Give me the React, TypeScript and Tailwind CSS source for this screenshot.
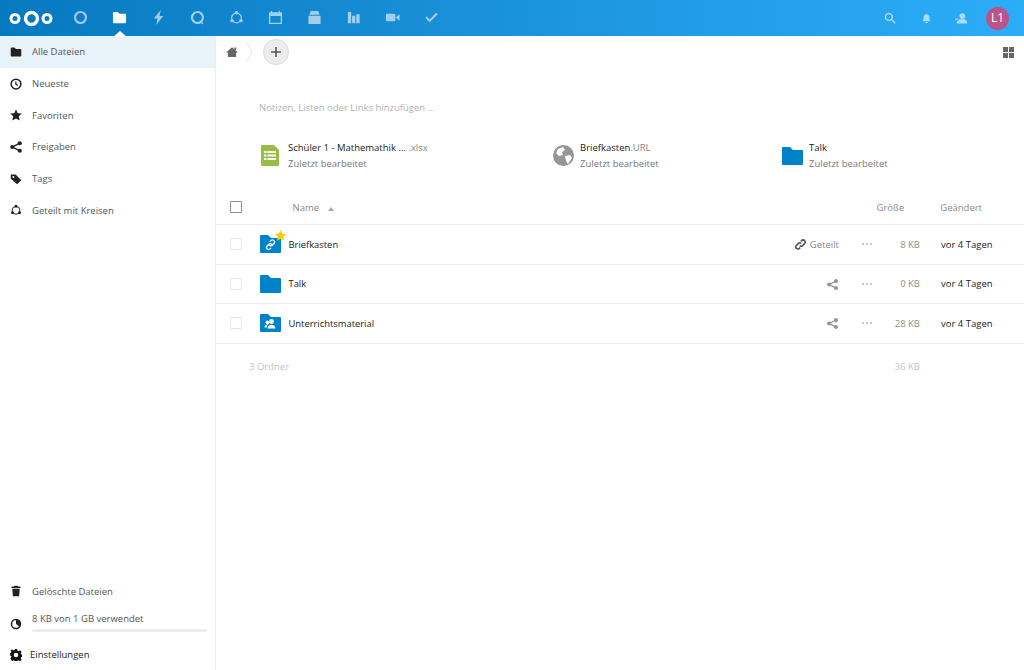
const NavIcon = ({ children, active }: { children: React.ReactNode; active?: boolean }) => (
  <div className={"relative w-[39px] h-9 flex items-center justify-center " + (active ? "opacity-100" : "opacity-60")}>
    <svg width="15" height="15" viewBox="0 0 16 16" fill="white" className="-mt-[1px]">
      {children}
    </svg>
  </div>
);

const Folder = ({ children, star }: { children?: React.ReactNode; star?: boolean }) => (
  <div className="relative w-[21px] h-[18px] shrink-0">
    <svg width="21" height="18" viewBox="0 0 21 18" fill="#0082c9">
      <path d="M0 1a1 1 0 0 1 1-1h7l3 3h9a1 1 0 0 1 1 1v13a1 1 0 0 1-1 1H1a1 1 0 0 1-1-1z" />
      {children}
    </svg>
    {star && (
      <svg className="absolute -top-[5px] -right-[5px]" width="11" height="11" viewBox="0 0 16 16" fill="#fc0">
        <path d="M8 0l2.400 5.200 5.600.7-4.100 3.900 1.100 5.700L8 12.700l-5 2.800 1.100-5.700L0 5.900l5.600-.7z" />
      </svg>
    )}
  </div>
);

const ShareIcon = () => (
  <svg width="11" height="11" viewBox="0 0 16 16" fill="#969696" className="mr-[1px]">
    <circle cx="3" cy="8" r="3" />
    <circle cx="13" cy="3" r="3" />
    <circle cx="13" cy="13" r="3" />
    <path d="M3 7l10-5v2L3 9zM3 7l10 5v2L3 9z" />
  </svg>
);

const Circles = () => (
  <>
    <circle cx="8" cy="8.500" r="5.200" fill="none" stroke="currentColor" strokeWidth="1.300" />
    <circle cx="8" cy="3" r="1.900" />
    <circle cx="3.200" cy="11.500" r="1.900" />
    <circle cx="12.800" cy="11.500" r="1.900" />
  </>
);

const SideItem = ({ icon, label, active }: { icon: React.ReactNode; label: string; active?: boolean }) => (
  <div className={"flex items-center h-[31.7px] pl-[10px] text-[#222] " + (active ? "bg-[#e8f3f9]" : "")}>
    <svg width="12" height="12" viewBox="0 0 16 16" fill="#222" className="shrink-0">
      {icon}
    </svg>
    <span className="ml-[10px] mt-[1px] text-[9.5px] text-[#555]">{label}</span>
  </div>
);

const Row = ({
  name,
  icon,
  share,
  size,
}: {
  name: string;
  icon: React.ReactNode;
  share: React.ReactNode;
  size: string;
}) => (
  <div className="flex items-center h-[39.5px] border-b border-[#ededed]">
    <div className="w-[12px] h-[12px] ml-[13.500px] border border-[#e6e6e6] rounded-[1px] shrink-0" />
    <div className="ml-[18.500px]">{icon}</div>
    <span className="ml-[7.500px] mt-[1px] text-[9.4px] text-[#222] flex-1">{name}</span>
    <div className="flex justify-end items-center w-[60px] mt-[1px] text-[9.5px] text-[#888]">{share}</div>
    <div className="w-[40px] pl-[23px] flex gap-[2px] shrink-0">
      <i className="w-[2px] h-[2px] rounded-full bg-[#b5b5b5]" />
      <i className="w-[2px] h-[2px] rounded-full bg-[#b5b5b5]" />
      <i className="w-[2px] h-[2px] rounded-full bg-[#b5b5b5]" />
    </div>
    <span className="w-[41px] mt-[1px] text-right text-[9.5px] text-[#8f8f8f]">{size}</span>
    <span className="ml-[21px] mt-[1px] w-[83px] text-[9.5px] text-[#222]">vor 4 Tagen</span>
  </div>
);

const Recent = ({
  icon,
  title,
  ext,
  width,
}: {
  icon: React.ReactNode;
  title: string;
  ext?: string;
  width: string;
}) => (
  <div className={"flex items-center " + width}>
    <div className="w-[27px] shrink-0 flex -mt-[1px]">{icon}</div>
    <div className="flex flex-col gap-[2px] text-[9.5px] leading-[14px]">
      <span className="text-[#222] whitespace-nowrap">
        {title}
        {ext && <span className="text-[#888]">{ext}</span>}
      </span>
      <span className="text-[#777]">Zuletzt bearbeitet</span>
    </div>
  </div>
);

export default function App() {
  return (
    <div className="w-[1024px] h-[670px] overflow-hidden bg-white font-['Open_Sans',sans-serif] flex flex-col">
      <header className="h-9 shrink-0 flex items-center bg-gradient-to-r from-[#0679c0] to-[#2cadf8]">
        <svg className="ml-[9px] shrink-0" width="44" height="22" viewBox="0 0 44 22" fill="none" stroke="white">
          <circle cx="22.500" cy="11.500" r="6" strokeWidth="3.400" />
          <circle cx="6" cy="11.500" r="4" strokeWidth="3" />
          <circle cx="38" cy="11.500" r="4" strokeWidth="3" />
        </svg>
        <div className="flex ml-[8px]">
          <NavIcon>
            <path fillRule="evenodd" d="M8 1a7 7 0 1 0 0 14A7 7 0 0 0 8 1zm0 2.300a4.700 4.700 0 1 1 0 9.400 4.700 4.700 0 0 1 0-9.400z" />
          </NavIcon>
          <NavIcon active>
            <path d="M1 3a1 1 0 0 1 1-1h4l2 2h6a1 1 0 0 1 1 1v8a1 1 0 0 1-1 1H2a1 1 0 0 1-1-1z" />
          </NavIcon>
          <NavIcon>
            <path d="M10.500 0L3 9h4L5.500 16 13 6.500H9z" />
          </NavIcon>
          <NavIcon>
            <path fillRule="evenodd" d="M8 1a7 7 0 1 0 3.500 13l2.500 1.500-.8-3A7 7 0 0 0 8 1zm0 2.300a4.700 4.700 0 1 1 0 9.400 4.700 4.700 0 0 1 0-9.400z" />
          </NavIcon>
          <NavIcon>
            <g color="white">
              <Circles />
            </g>
          </NavIcon>
          <NavIcon>
            <path fillRule="evenodd" d="M3 1h1.500v1.500h7V1H13v1.500h1a1 1 0 0 1 1 1V14a1 1 0 0 1-1 1H2a1 1 0 0 1-1-1V3.500a1 1 0 0 1 1-1h1zM2.500 6.500v7h11v-7z" />
          </NavIcon>
          <NavIcon>
            <path d="M4 1h8l1.500 4h-11zM1.500 6h13v8a1 1 0 0 1-1 1h-11a1 1 0 0 1-1-1z" />
          </NavIcon>
          <NavIcon>
            <path d="M2 2h3.500v12H2zM6.500 6H10v8H6.500zM11 4.500h3.500V14H11z" />
          </NavIcon>
          <NavIcon>
            <path d="M1 5a1 1 0 0 1 1-1h8a1 1 0 0 1 1 1v6a1 1 0 0 1-1 1H2a1 1 0 0 1-1-1zM12 7.500L15.500 4.500v7L12 8.500z" />
          </NavIcon>
          <NavIcon>
            <path d="M1.500 8.500l1.500-1.500 3 3 7-7 1.500 1.500-8.500 8.500z" />
          </NavIcon>
        </div>
        <div className="flex-1" />
        <div className="flex items-center opacity-60">
          <svg width="12" height="12" viewBox="0 0 16 16" fill="none" stroke="white" strokeWidth="2">
            <circle cx="6.500" cy="6.500" r="4.500" />
            <path d="M10 10l5 5" />
          </svg>
          <svg className="ml-[25px]" width="11" height="11" viewBox="0 0 16 16" fill="white">
            <path d="M8 1a1.300 1.300 0 0 1 1.300 1.300A4.500 4.500 0 0 1 12.500 7v3l1.500 2H2l1.500-2V7a4.500 4.500 0 0 1 3.200-4.700A1.300 1.300 0 0 1 8 1zM6 13h4a2 2 0 0 1-4 0z" />
          </svg>
          <svg className="ml-[23px]" width="13" height="13" viewBox="0 0 16 16" fill="white">
            <circle cx="9" cy="5" r="3.500" />
            <path d="M2 14c0-3 2-4 4-5h6c2 1 3 2 3 5zM0 8h4v1.500H0z" />
          </svg>
        </div>
        <div className="ml-[18px] mr-[15px] w-[23px] h-[23px] rounded-full bg-[#bb5589] flex items-center justify-center text-white text-[12px]">
          L1
        </div>
      </header>

      <div className="flex flex-1 min-h-0">
        <aside className="relative w-[216px] shrink-0 border-r border-[#ededed] flex flex-col">
          <svg className="absolute left-[113px] -top-[5px]" width="14" height="6" viewBox="0 0 14 6" fill="#fff">
            <path d="M7 0l7 6H0z" />
          </svg>
          <SideItem active label="Alle Dateien" icon={<path d="M1 3a1 1 0 0 1 1-1h4l2 2h6a1 1 0 0 1 1 1v8a1 1 0 0 1-1 1H2a1 1 0 0 1-1-1z" />} />
          <SideItem
            label="Neueste"
            icon={
              <path
                fillRule="evenodd"
                d="M8 .5a7.500 7.500 0 1 0 0 15A7.500 7.500 0 0 0 8 .5zm0 2a5.500 5.500 0 1 1 0 11 5.500 5.500 0 0 1 0-11zM7 4.500v4l3 2 .8-1.200L8.500 7.700V4.500z"
              />
            }
          />
          <SideItem label="Favoriten" icon={<path d="M8 .5l2.300 5 5.400.6-4 3.700 1.100 5.400L8 12.500l-4.800 2.700 1.100-5.400-4-3.700 5.400-.6z" />} />
          <SideItem
            label="Freigaben"
            icon={
              <>
                <circle cx="3" cy="8" r="2.800" />
                <circle cx="13" cy="3" r="2.800" />
                <circle cx="13" cy="13" r="2.800" />
                <path d="M3 7l10-5v2L3 9zM3 7l10 5v2L3 9z" />
              </>
            }
          />
          <SideItem
            label="Tags"
            icon={<path fillRule="evenodd" d="M1 2h6.500L15 9.500 9.500 15 1 7.500zM4.500 4a1.300 1.300 0 1 0 0 2.600 1.300 1.300 0 0 0 0-2.600z" />}
          />
          <SideItem
            label="Geteilt mit Kreisen"
            icon={
              <g color="#222">
                <Circles />
              </g>
            }
          />
          <div className="flex-1" />
          <SideItem
            label="Gelöschte Dateien"
            icon={<path d="M6 1h4l.5 1H14v2H2V2h3.500zM3 5h10l-.8 9.200a1 1 0 0 1-1 .8H4.800a1 1 0 0 1-1-.8z" />}
          />
          <div className="flex items-center h-[32px] pl-[10px] -mt-[1px]">
            <svg width="12" height="12" viewBox="0 0 16 16" fill="#222" className="shrink-0 mt-[3px]">
              <path fillRule="evenodd" d="M8 1a7 7 0 1 0 0 14A7 7 0 0 0 8 1zm0 2v5l4 3a5 5 0 0 1-4 2 5 5 0 0 1 0-10z" />
            </svg>
            <div className="ml-[10px] flex-1 mr-[8px] flex flex-col gap-[3px]">
              <span className="text-[9.5px] leading-[14px] text-[#555]">8 KB von 1 GB verwendet</span>
              <div className="h-[3px] rounded-full bg-[#ededed]" />
            </div>
          </div>
          <div className="flex items-center h-[31px] pl-[10px] mt-[1px]">
            <svg width="12" height="12" viewBox="0 0 16 16" fill="#111" className="shrink-0">
              <path
                fillRule="evenodd"
                d="M6.500 0h3l.4 2.300 1.400.6 2-1.300 2.100 2.100-1.300 2 .6 1.400 2.300.4v3l-2.300.4-.6 1.400 1.300 2-2.100 2.100-2-1.300-1.400.6-.4 2.300h-3l-.4-2.300-1.400-.6-2 1.300L.6 12.300l1.300-2-.6-1.400L-1 8.500v-3l2.300-.4.600-1.400-1.300-2L2.700.6l2 1.300 1.400-.6zM8 5a3 3 0 1 0 0 6 3 3 0 0 0 0-6z"
              />
            </svg>
            <span className="ml-[8px] mt-[1px] text-[9.5px] text-[#222]">Einstellungen</span>
          </div>
        </aside>

        <main className="flex-1 min-w-0 flex flex-col">
          <div className="h-8 flex items-center">
            <svg className="ml-[10px]" width="12" height="12" viewBox="0 0 16 16" fill="#666">
              <path d="M8 1.500L16 8.500h-2.500V14.500h-11V8.500H0zM11 2h2.500v4L11 4z" />
            </svg>
            <svg className="ml-[8px]" width="7" height="32" viewBox="0 0 7 32" fill="none" stroke="#e6e6e6">
              <path d="M.5 6l5.500 10-5.500 10" />
            </svg>
            <div className="ml-[10px] w-[26px] h-[26px] rounded-full bg-[#ededed] border border-[#dbdbdb] flex items-center justify-center">
              <svg width="10" height="10" viewBox="0 0 10 10" fill="#555">
                <path d="M4.200 0h1.600v4.200H10v1.600H5.800V10H4.200V5.800H0V4.200h4.200z" />
              </svg>
            </div>
            <svg className="ml-auto mr-[10px]" width="11" height="11" viewBox="0 0 11 11" fill="#666">
              <path d="M0 0h5v5H0zM6 0h5v5H6zM0 6h5v5H0zM6 6h5v5H6z" />
            </svg>
          </div>

          <div className="mt-[32px] ml-[43px] h-[17px] flex items-center text-[9.5px] text-[#b3b3b3]">Notizen, Listen oder Links hinzufügen ...</div>

          <div className="mt-[23px] flex ml-[45px] h-[32px]">
            <Recent
              width="w-[292px]"
              title="Schüler 1 - Mathemathik ... "
              ext=".xlsx"
              icon={
                <svg width="18" height="21" viewBox="0 0 18 21">
                  <path d="M1 0h12l5 5v15a1 1 0 0 1-1 1H1a1 1 0 0 1-1-1V1a1 1 0 0 1 1-1z" fill="#9bbd45" />
                  <path d="M3 6h2.500v2H3zM6.500 6H15v2H6.500zM3 9.500h2.500v2H3zM6.500 9.500H15v2H6.500zM3 13h2.500v2H3zM6.500 13H15v2H6.500z" fill="#fff" />
                </svg>
              }
            />
            <Recent
              width="w-[229px]"
              title="Briefkasten"
              ext=".URL"
              icon={
                <svg width="21" height="21" viewBox="0 0 21 21">
                  <circle cx="10.500" cy="10.500" r="10.500" fill="#969696" />
                  <path d="M5 4l5-2 2 3-3 2 1 3-4 1-3-3zM12 11l5-1 2 3-4 6-2-3z" fill="#fff" />
                </svg>
              }
            />
            <Recent width="w-[200px]" title="Talk" icon={<Folder />} />
          </div>

          <div className="mt-[20px] flex items-center h-[33px] border-b border-[#ededed] text-[9.5px] text-[#888]">
            <div className="w-[12px] h-[12px] ml-[13.500px] -mt-[2px] border border-[#909090] rounded-[1px] shrink-0" />
            <span className="ml-[51px] mt-[1px]">Name</span>
            <svg className="ml-[9px] mt-[2px]" width="6" height="4" viewBox="0 0 6 4" fill="#aaa">
              <path d="M3 0l3 4H0z" />
            </svg>
            <span className="ml-auto mt-[1px]">Größe</span>
            <span className="ml-[36px] mr-[42px] mt-[1px]">Geändert</span>
          </div>

          <Row
            name="Briefkasten"
            share={
              <>
                <svg width="11" height="11" viewBox="0 0 16 16" fill="none" stroke="#555" strokeWidth="2.400">
                  <path d="M7 9.500a3 3 0 0 0 4 0l3-3a3 3 0 0 0-4.300-4.200L8.500 3.500" />
                  <path d="M9 6.500a3 3 0 0 0-4 0l-3 3a3 3 0 0 0 4.300 4.200l1.200-1.200" />
                </svg>
                <span className="ml-[4px]">Geteilt</span>
              </>
            }
            size="8 KB"
            icon={
              <Folder star>
                <g fill="none" stroke="#fff" strokeWidth="1.300" strokeLinecap="round">
                  <path d="M9.300 10.200a2 2 0 0 0 2.900 0l1.700-1.700a2 2 0 0 0-2.900-2.900l-.8.8" />
                  <path d="M11.700 9.300a2 2 0 0 0-2.900 0l-1.700 1.700a2 2 0 0 0 2.900 2.900l.8-.8" />
                </g>
              </Folder>
            }
          />
          <Row name="Talk" share={<ShareIcon />} size="0 KB" icon={<Folder />} />
          <Row
            name="Unterrichtsmaterial"
            share={<ShareIcon />}
            size="28 KB"
            icon={
              <Folder>
                <circle cx="11.500" cy="7.500" r="2.400" fill="#fff" />
                <circle cx="7.500" cy="8.500" r="1.900" fill="#fff" />
                <path d="M7.500 14.500c0-2.500 2-3.800 4-3.800s4 1.300 4 3.800zM4.500 13.500c0-1.800 1.500-3 3-3l-.8 3z" fill="#fff" />
              </Folder>
            }
          />

          <div className="flex items-center h-[48px] text-[9.5px] text-[#c4c4c4]">
            <span className="ml-[33px]">3 Ordner</span>
            <span className="ml-auto mr-[104px]">36 KB</span>
          </div>
        </main>
      </div>
    </div>
  );
}
